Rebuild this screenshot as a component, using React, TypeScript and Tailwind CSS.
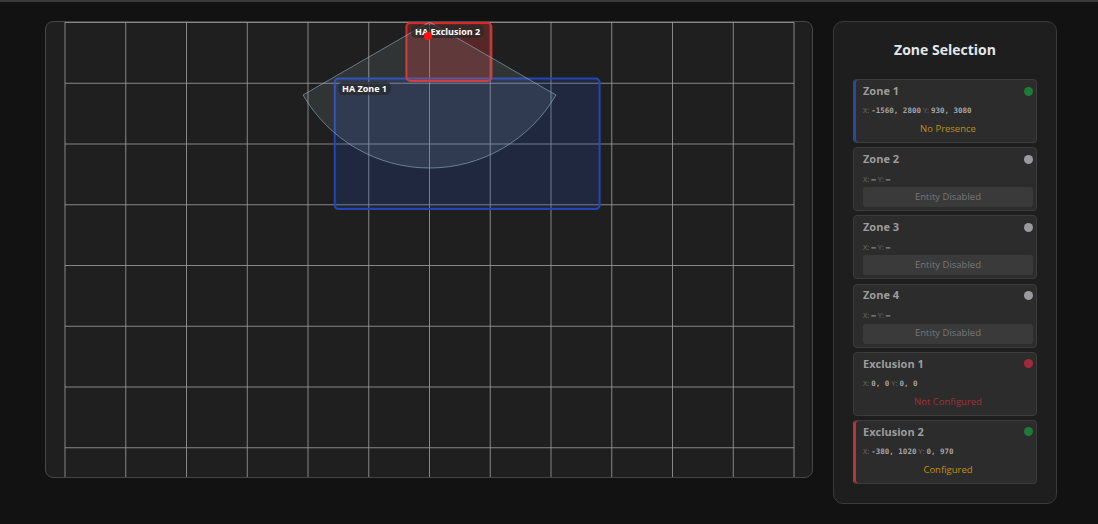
import React from 'react';

type Zone = {
  name: string;
  dot: string;
  accent?: string;
  x?: string;
  y?: string;
  status: string;
  statusColor: string;
  disabled?: boolean;
};

const zones: Zone[] = [
  { name: 'Zone 1', dot: 'bg-[#1f7a3a]', accent: 'border-l-[#2a4aa0] shadow-[inset_2px_0_0_#2a4aa0]', x: '-1560, 2800', y: '930, 3080', status: 'No Presence', statusColor: 'text-[#b8901c]' },
  { name: 'Zone 2', dot: 'bg-[#9a9a9e]', status: 'Entity Disabled', statusColor: 'text-[#777]', disabled: true },
  { name: 'Zone 3', dot: 'bg-[#9a9a9e]', status: 'Entity Disabled', statusColor: 'text-[#777]', disabled: true },
  { name: 'Zone 4', dot: 'bg-[#9a9a9e]', status: 'Entity Disabled', statusColor: 'text-[#777]', disabled: true },
  { name: 'Exclusion 1', dot: 'bg-[#a3283a]', x: '0, 0', y: '0, 0', status: 'Not Configured', statusColor: 'text-[#a2303a]' },
  { name: 'Exclusion 2', dot: 'bg-[#1f7a3a]', accent: 'border-l-[#b03a3a] shadow-[inset_2px_0_0_#b03a3a]', x: '-380, 1020', y: '0, 970', status: 'Configured', statusColor: 'text-[#c0900f]' },
];

// radar canvas: 1000mm = 60.75px, sensor at top centre
const S = 0.06075;
const OX = 383.5;
const px = (mm: number) => OX + mm * S;
const py = (mm: number) => mm * S;

function RadarMap() {
  const vLines = Array.from({ length: 13 }, (_, i) => px((i - 6) * 1000));
  const hLines = Array.from({ length: 8 }, (_, i) => py(i * 1000));
  const r = 146;
  const fx = r * Math.sin(Math.PI / 3);
  const fy = r * Math.cos(Math.PI / 3);

  return (
    <svg width="766" height="455" className="block">
      {vLines.map((x, i) => (
        <line key={'v' + i} x1={x} y1={0} x2={x} y2={456} stroke="#999" strokeOpacity="0.85" strokeWidth="1" />
      ))}
      {hLines.map((y, i) => (
        <line key={'h' + i} x1={vLines[0]} y1={y + 0.5} x2={vLines[12]} y2={y + 0.5} stroke="#999" strokeOpacity="0.85" strokeWidth="1" />
      ))}
      <rect x={px(-1560)} y={py(930)} width={px(2800) - px(-1560)} height={py(3080) - py(930)} rx="4" fill="rgba(40,80,200,0.2)" stroke="#2446b4" strokeWidth="2" />
      <rect x={px(-380)} y={py(0) + 1} width={px(1020) - px(-380)} height={py(970) - 1} rx="4" fill="rgba(220,60,60,0.3)" stroke="#d42c2c" strokeWidth="2" />
      <path
        d={`M ${OX} 0 L ${OX - fx} ${fy} A ${r} ${r} 0 0 0 ${OX + fx} ${fy} Z`}
        fill="rgba(160,190,200,0.13)"
        stroke="rgba(150,180,195,0.6)"
        strokeWidth="1"
      />
    </svg>
  );
}

export default function App() {
  return (
    <div className="min-h-screen bg-[#121212] border-t-2 border-[#3a3a3a] pl-[45px] pt-[19px] flex items-start gap-[20px]" style={{ fontFamily: '"Open Sans", "Noto Sans", sans-serif' }}>
      <div className="relative w-[768px] h-[457px] rounded-lg border border-[#464646] bg-[#1f1f1f] overflow-hidden">
        <RadarMap />
        <span className="absolute left-[292px] top-[60px] px-[4px] h-[13px] leading-[13px] rounded-[5px] bg-[#2a2a2a]/70 text-white text-[9px] font-bold">HA Zone 1</span>
        <span className="absolute left-[365px] top-[3px] px-[4px] h-[13px] leading-[13px] rounded-[5px] bg-[#2a2a2a]/70 text-white text-[9px] font-bold">HA Exclusion 2</span>
        {/* live target */}
        <span className="absolute left-[378px] top-[10px] w-[8px] h-[8px] rounded-full bg-[#ff1010]"></span>
      </div>

      <div className="w-[224px] h-[483px] rounded-[10px] border border-[#3a3a3a] bg-[#1e1e1e] pt-[18px] px-[19px]">
        <h2 className="text-center text-[14px] leading-[20px] font-bold text-[#e4e6ea] mb-[19px]">Zone Selection</h2>
        <div className="flex flex-col gap-[4.2px]">
          {zones.map((z) => (
            <div key={z.name} className={`h-[64px] rounded-[4px] border border-[#3c3c3c] bg-[#2c2c2c] pl-[9px] pr-[3px] pt-[4px] ${z.accent ?? ''}`}>
              <div className="h-[14px] flex items-center justify-between">
                <span className="text-[11px] font-bold text-[#9c9c9c]">{z.name}</span>
                <span className={`w-[9px] h-[9px] rounded-full ${z.dot}`}></span>
              </div>
              <div className="mt-[8px] h-[10px] flex items-center text-[7.5px] text-[#6e6e6e] whitespace-nowrap">
                <span>X:&nbsp;</span>
                <span className="font-bold text-[#a4a4a4]" style={{ fontFamily: '"DejaVu Sans Mono", monospace' }}>{z.x ?? '—'}</span>
                <span>&nbsp;Y:&nbsp;</span>
                <span className="font-bold text-[#a4a4a4]" style={{ fontFamily: '"DejaVu Sans Mono", monospace' }}>{z.y ?? '—'}</span>
              </div>
              <div className={`mt-[3px] h-[20px] flex items-center justify-center rounded-[3px] text-[9.5px] ${z.statusColor} ${z.disabled ? 'bg-[#3a3a3a]' : ''}`}>
                {z.status}
              </div>
            </div>
          ))}
        </div>
      </div>
    </div>
  );
}
